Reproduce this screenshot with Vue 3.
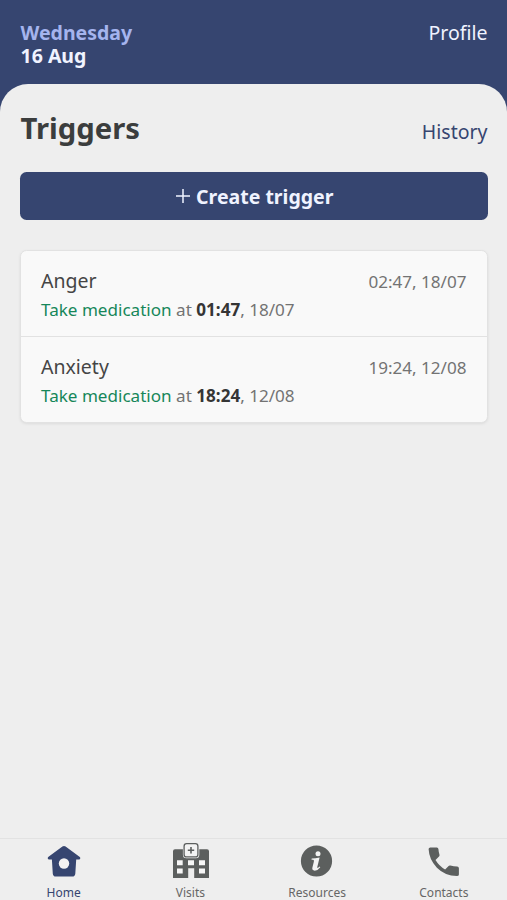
<template>
  <div class="app">
    <header class="header">
      <div class="date">
        <span class="weekday">Wednesday</span><br />
        <span>16 Aug</span>
      </div>
      <a class="profile">Profile</a>
    </header>

    <main class="sheet">
      <div class="title-row">
        <h1>Triggers</h1>
        <a class="history">History</a>
      </div>

      <button class="create">
        <svg width="14" height="14" viewBox="0 0 14 14">
          <path d="M7 0V14M0 7H14" stroke="#f0f3ff" stroke-width="1.5" />
        </svg>
        <span>Create trigger</span>
      </button>

      <ul class="list">
        <li v-for="trigger in triggers" :key="trigger.name" class="item">
          <div class="item-top">
            <span class="name">{{ trigger.name }}</span>
            <span class="when">{{ trigger.time }}, {{ trigger.date }}</span>
          </div>
          <div class="action">
            <span class="link">{{ trigger.action }}</span> at
            <b>{{ trigger.actionTime }}</b>, {{ trigger.date }}
          </div>
        </li>
      </ul>
    </main>

    <nav class="tabs">
      <a
        v-for="tab in tabs"
        :key="tab"
        class="tab"
        :class="{ active: tab === activeTab }"
        @click="activeTab = tab"
      >
        <svg width="40" height="40" viewBox="0 0 40 40">
          <g v-if="tab === 'Home'" transform="translate(0 .7)">
            <path
              d="M19.4 5.7Q21 4.700 22.6 5.700L36.800 16.400Q37.800 17.300 37 18.400L36.300 18.900H33.200L32.300 33Q32 35.800 29.300 35.800H12.800Q10.100 35.800 9.800 33L8.900 18.900H5.800L5 18.400Q4.300 17.300 5.200 16.400Z"
            />
            <circle cx="21" cy="22.800" r="5.200" fill="#f4f2f2" />
          </g>
          <g v-else-if="tab === 'Visits'" transform="translate(.5 .4)">
            <path d="M4.500 8.800H36.500Q38.500 8.800 38.500 10.800V37.500H23.700V27.800H17.700V37.500H2.500V10.800Q2.500 8.800 4.500 8.800Z" />
            <path
              fill="#f7f7f7"
              d="M6.500 19.800H12.200V24.800H6.500ZM17.500 19.800H23.500V24.800H17.500ZM28.500 19.800H34.500V24.800H28.500ZM6.500 28H12.200V33.200H6.500ZM28.500 28H34.500V33.200H28.500Z"
            />
            <rect x="12.400" y="2.300" width="16.400" height="15.600" rx="3.500" fill="#eee" />
            <rect x="13.600" y="3.300" width="13.800" height="13.200" rx="2.500" fill="#f3f3f3" stroke="currentColor" stroke-width="1.300" />
            <path d="M20.500 6.700V13.100M17.300 9.900H23.700" stroke="currentColor" stroke-width="1.600" />
          </g>
          <g v-else-if="tab === 'Resources'">
            <circle cx="19.500" cy="21" r="15.600" />
            <circle cx="21" cy="13.700" r="2.500" fill="#f3f3f3" />
            <path
              fill="#f3f3f3"
              d="M14.700 18.500Q18.500 18.400 22.600 17.400L20.300 27.100Q20.200 28.300 21.100 27.700L22.600 26.500L23.300 27.200Q20.700 30.700 17.700 30.700Q14.700 30.500 15.400 27.600L16.900 21.500Q17.200 19.800 16.100 19.700H14.500Z"
            />
          </g>
          <path
            v-else
            d="M5.900 7.200H12.400Q13.900 7.200 14 8.700Q14.200 11.700 15.100 14.500Q15.300 15.600 14.600 16.300L11.100 19.700Q14.800 25.800 20.700 29.200L24.200 25.700Q25 25 25.900 25.300Q29.500 26.300 32.700 26.300Q34.500 26.400 34.500 28V34.200Q34.500 35.900 32.500 35.900Q20.500 35.600 12.500 27.500Q4.700 19.500 4.200 8.900Q4.300 7.300 5.900 7.200Z"
            transform="translate(.4 .2)"
          />
        </svg>
        <span>{{ tab }}</span>
      </a>
    </nav>
  </div>
</template>

<script setup>
import { ref } from "vue";

const triggers = [
  {
    name: "Anger",
    time: "02:47",
    date: "18/07",
    action: "Take medication",
    actionTime: "01:47",
  },
  {
    name: "Anxiety",
    time: "19:24",
    date: "12/08",
    action: "Take medication",
    actionTime: "18:24",
  },
];

const tabs = ["Home", "Visits", "Resources", "Contacts"];
const activeTab = ref("Home");
</script>

<style>
body {
  margin: 0;
  background: #eeeeee;
}
</style>

<style scoped>
.app {
  display: flex;
  flex-direction: column;
  height: 100vh;
  overflow: hidden;
  background: #364570;
  font-family: "Noto Sans", sans-serif;
  font-size: 19.5px;
}

.header {
  display: flex;
  justify-content: space-between;
  height: 84.4px;
  padding: 21px 19.5px 0 20.5px;
  box-sizing: border-box;
  line-height: 23px;
  color: #f0f3ff;
}

.date {
  font-weight: 700;
}

.weekday {
  color: #a5b4ee;
}

.sheet {
  flex: 1;
  padding: 24px 19.5px 0 20px;
  background: #eeeeee;
  border-radius: 28px 28px 0 0;
}

.title-row {
  display: flex;
  justify-content: space-between;
  align-items: baseline;
  height: 64px;
}

h1 {
  margin: 0 0 0 0.5px;
  font-size: 29.25px;
  line-height: 40px;
  color: #3b3d3d;
}

.history {
  color: #364570;
}

.create {
  display: flex;
  align-items: center;
  justify-content: center;
  gap: 6px;
  width: 100%;
  height: 48px;
  padding: 0 0 0 2px;
  border: 0;
  border-radius: 6.5px;
  background: #364570;
  color: #f0f3ff;
  font: 700 19.5px "Noto Sans", sans-serif;
}

.list {
  margin: 30px 0 0;
  padding: 0;
  list-style: none;
  background: #f9f9f9;
  border: 1px solid #e2e2e2;
  border-radius: 6.5px;
  box-shadow: 0 1px 3px rgba(0, 0, 0, 0.08);
}

.item {
  height: 85px;
  padding: 15.6px 20px 0;
  box-sizing: border-box;
}

.item + .item {
  height: 86px;
  border-top: 1px solid #e2e2e2;
}

.item-top {
  display: flex;
  justify-content: space-between;
  align-items: baseline;
  line-height: 27px;
}

.name {
  color: #454545;
}

.when,
.action {
  font-size: 17.08px;
  color: #737373;
}

.action {
  margin-top: 3px;
  line-height: 24px;
}

.action b {
  color: #353535;
}

.link {
  color: #16875a;
}

.tabs {
  display: flex;
  height: 62px;
  box-sizing: border-box;
  border-top: 1px solid #e2e2e2;
  background: #eeeeee;
}

.tab {
  flex: 1;
  display: flex;
  flex-direction: column;
  align-items: center;
  padding-top: 1px;
  font-size: 12px;
  line-height: 15px;
  color: #666666;
}

.tab svg {
  flex: none;
  color: #5c5f5e;
  fill: currentColor;
}

.tab span {
  margin: 5px 0 0 0.5px;
}

.tab.active,
.tab.active svg {
  color: #364570;
}
</style>
